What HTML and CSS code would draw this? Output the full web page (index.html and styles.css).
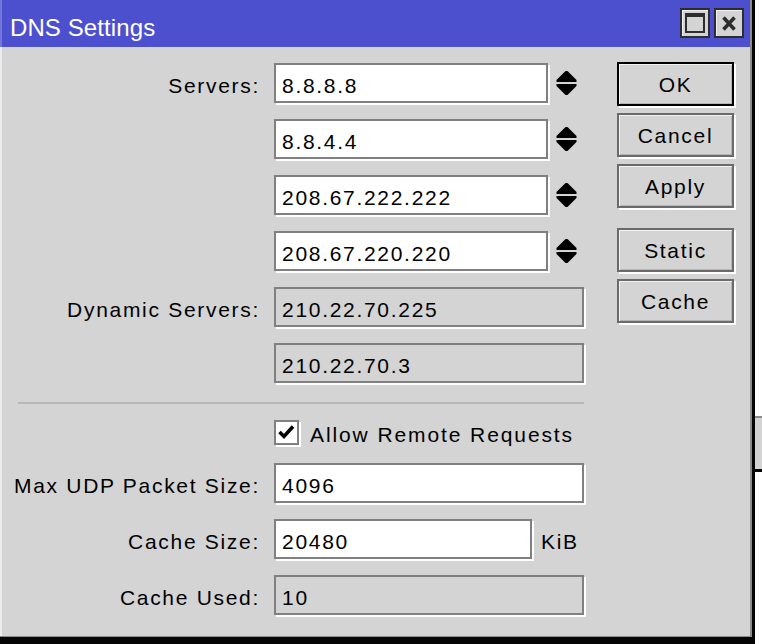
FILE: index.html
```html
<!DOCTYPE html>
<html>
<head>
<meta charset="utf-8">
<title>DNS Settings</title>
<link rel="stylesheet" href="styles.css">
</head>
<body>
<div class="desk">
  <div class="frame">
    <div class="window">
      <div class="titlebar">
        <span class="title">DNS Settings</span>
        <div class="tb-buttons">
          <div class="tb-btn"><span class="max-icon"></span></div>
          <div class="tb-btn">
            <svg class="close-icon" width="14" height="15" viewBox="0 0 14 15">
              <path d="M1.5 1.5 L12.5 13.5 M12.5 1.5 L1.5 13.5" stroke="#2d2d2d" stroke-width="3.6" fill="none"/>
            </svg>
          </div>
        </div>
      </div>
      <div class="content">
        <div class="form">
          <div class="label">Servers:</div>
          <div class="cell">
            <div class="field w-server">8.8.8.8</div>
            <svg class="spin" width="21" height="24" viewBox="0 0 21 24"><polygon points="9.5,0 11.5,0 20.5,9 20.5,11 0.5,11 0.5,9"/><polygon points="0.5,13 20.5,13 20.5,15 11.5,24 9.5,24 0.5,15"/></svg>
          </div>
          <div class="cell col2">
            <div class="field w-server">8.8.4.4</div>
            <svg class="spin" width="21" height="24" viewBox="0 0 21 24"><polygon points="9.5,0 11.5,0 20.5,9 20.5,11 0.5,11 0.5,9"/><polygon points="0.5,13 20.5,13 20.5,15 11.5,24 9.5,24 0.5,15"/></svg>
          </div>
          <div class="cell col2">
            <div class="field w-server">208.67.222.222</div>
            <svg class="spin" width="21" height="24" viewBox="0 0 21 24"><polygon points="9.5,0 11.5,0 20.5,9 20.5,11 0.5,11 0.5,9"/><polygon points="0.5,13 20.5,13 20.5,15 11.5,24 9.5,24 0.5,15"/></svg>
          </div>
          <div class="cell col2">
            <div class="field w-server">208.67.220.220</div>
            <svg class="spin" width="21" height="24" viewBox="0 0 21 24"><polygon points="9.5,0 11.5,0 20.5,9 20.5,11 0.5,11 0.5,9"/><polygon points="0.5,13 20.5,13 20.5,15 11.5,24 9.5,24 0.5,15"/></svg>
          </div>
          <div class="label">Dynamic Servers:</div>
          <div class="cell"><div class="field w-full readonly">210.22.70.225</div></div>
          <div class="cell col2"><div class="field w-full readonly">210.22.70.3</div></div>
          <div class="sep"></div>
          <div class="check-row col2">
            <div class="checkbox">
              <svg width="21" height="21" viewBox="0 0 21 21"><path d="M3.5 10 L8 14.5 L17 4.5" stroke="#000" stroke-width="3.6" fill="none"/></svg>
            </div>
            <span class="check-label">Allow Remote Requests</span>
          </div>
          <div class="label">Max UDP Packet Size:</div>
          <div class="cell"><div class="field w-full">4096</div></div>
          <div class="label">Cache Size:</div>
          <div class="cell baseline"><div class="field w-cache">20480</div><span class="unit">KiB</span></div>
          <div class="label">Cache Used:</div>
          <div class="cell"><div class="field w-full readonly">10</div></div>
        </div>
        <div class="buttons">
          <div class="btn default">OK</div>
          <div class="btn">Cancel</div>
          <div class="btn">Apply</div>
          <div class="btn group">Static</div>
          <div class="btn">Cache</div>
        </div>
      </div>
    </div>
  </div>
  <div class="sliver"></div>
</div>
</body>
</html>
```
FILE: styles.css
```css
html, body {
  margin: 0;
  padding: 0;
  background: #ffffff;
}

.desk {
  display: flex;
  align-items: flex-start;
  width: 762px;
  height: 644px;
  overflow: hidden;
  font-family: "Liberation Sans", Arial, sans-serif;
  font-size: 21px;
  letter-spacing: 1.7px;
  color: #000;
}

.frame {
  width: 755px;
  flex: none;
  box-sizing: border-box;
  border-right: 3px solid #050505;
  border-bottom: 8px solid #050505;
}

.window {
  border-right: 2px solid #8c8c8c;
  border-bottom: 1px solid #8c8c8c;
}

.titlebar {
  height: 47px;
  box-sizing: border-box;
  background: #4c50ce;
  border-left: 2px solid #7376da;
  display: flex;
  justify-content: space-between;
  align-items: flex-start;
  padding: 0 6px 0 8px;
}

.title {
  color: #ffffff;
  font-size: 24px;
  letter-spacing: 0.1px;
  line-height: 27px;
  margin-top: 14px;
}

.tb-buttons {
  display: flex;
  gap: 4px;
  margin-top: 8px;
}

.tb-btn {
  width: 30px;
  height: 30px;
  box-sizing: border-box;
  border: 2px solid #2d2d2d;
  background: #d4d4d4;
  box-shadow: inset 1px 1px 0 #f0f0f0;
  display: flex;
  align-items: center;
  justify-content: center;
}

.max-icon {
  display: block;
  width: 20px;
  height: 20px;
  box-sizing: border-box;
  border: 2px solid #2d2d2d;
  border-top-width: 4px;
  background: #d4d4d4;
}

.content {
  height: 589px;
  box-sizing: border-box;
  background: #d4d4d4;
  border-left: 2px solid #ececec;
  padding-top: 16px;
  display: flex;
  align-items: flex-start;
}

.form {
  display: grid;
  grid-template-columns: 258px 310px;
  column-gap: 14px;
  row-gap: 16px;
}

.col2 {
  grid-column: 2;
}

.label {
  grid-column: 1;
  height: 40px;
  box-sizing: border-box;
  padding-top: 8px;
  line-height: 30px;
  text-align: right;
  white-space: nowrap;
}

.cell {
  height: 40px;
  display: flex;
  align-items: center;
}

.cell.baseline {
  align-items: baseline;
}

.field {
  height: 40px;
  box-sizing: border-box;
  border: 2px solid #808080;
  background: #ffffff;
  box-shadow: 2px 2px 0 #ffffff;
  padding: 6px 0 0 6px;
  line-height: 30px;
  white-space: nowrap;
  flex: none;
}

.field.readonly {
  background: #d4d4d4;
}

.w-server { width: 274px; }
.w-full { width: 310px; }
.w-cache { width: 258px; }

.spin {
  margin-left: 8px;
  flex: none;
}

.spin polygon {
  fill: #000;
}

.unit {
  margin-left: 9px;
  line-height: 30px;
}

.sep {
  grid-column: 1 / -1;
  margin-left: 16px;
  margin-top: 3px;
  height: 2px;
  background: #b8b8b8;
}

.check-row {
  height: 27px;
  display: flex;
  align-items: flex-start;
}

.checkbox {
  width: 25px;
  height: 25px;
  box-sizing: border-box;
  border: 2px solid #808080;
  background: #ffffff;
  box-shadow: 2px 2px 0 #ffffff;
  display: flex;
  align-items: center;
  justify-content: center;
  flex: none;
}

.check-label {
  margin-left: 11px;
  margin-top: 2px;
  line-height: 25px;
  letter-spacing: 1.9px;
  white-space: nowrap;
}

.buttons {
  margin-left: 33px;
  margin-top: -1px;
  display: flex;
  flex-direction: column;
  gap: 7px;
}

.btn {
  width: 117px;
  height: 44px;
  box-sizing: border-box;
  border: 2px solid #6a6a6a;
  background: #d4d4d4;
  box-shadow: 2px 2px 0 #ffffff, inset 1px 1px 0 #f2f2f2, inset -1px -1px 0 #b4b4b4;
  padding-top: 2px;
  line-height: 38px;
  text-align: center;
}

.btn.default {
  border-color: #000000;
}

.btn.group {
  margin-top: 13px;
}

.sliver {
  flex: none;
  width: 7px;
  height: 56px;
  margin-top: 416px;
  box-sizing: border-box;
  background: #d4d4d4;
  border-top: 2px solid #8c8c8c;
  border-bottom: 3px solid #050505;
}
```
